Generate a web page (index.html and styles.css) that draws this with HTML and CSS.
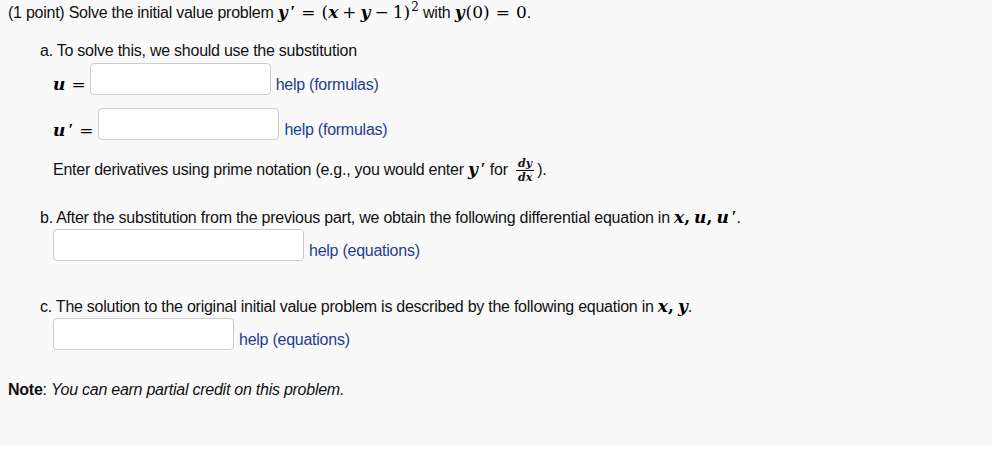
FILE: index.html
```html
<!DOCTYPE html>
<html>
<head>
<meta charset="utf-8">
<link rel="stylesheet" href="styles.css">
</head>
<body>
<div class="problem">
  <p class="line intro">(1 point) Solve the initial value problem <span class="m"><i>y</i><span class="pr">′</span><span class="rel">=</span>(<i>x</i><span class="bin">+</span><i>y</i><span class="bin">−</span>1)<sup>2</sup></span> with <span class="m"><i class="fn">y</i>(0)<span class="rel">=</span>0</span>.</p>

  <div class="part">
    <p class="line">a. To solve this, we should use the substitution</p>
    <div class="row row-u">
      <span class="m lbl"><i>u</i><span class="rel">=</span></span>
      <input class="ans w180" type="text">
      <a class="help">help (formulas)</a>
    </div>
    <div class="row row-up">
      <span class="m lbl"><i>u</i><span class="pr">′</span><span class="rel">=</span></span>
      <input class="ans w180" type="text">
      <a class="help">help (formulas)</a>
    </div>
    <p class="line sub enter">Enter derivatives using prime notation (e.g., you would enter <span class="m"><i>y</i><span class="pr">′</span></span> for <span class="frac"><span class="num">dy</span><span class="den">dx</span></span>).</p>
  </div>

  <div class="part part-b">
    <p class="line">b. After the substitution from the previous part, we obtain the following differential equation in <span class="m"><i>x</i><span class="pun">,</span><i>u</i><span class="pun">,</span><i>u</i><span class="pr">′</span></span>.</p>
    <div class="row sub">
      <input class="ans w250" type="text">
      <a class="help">help (equations)</a>
    </div>
  </div>

  <div class="part part-c">
    <p class="line">c. The solution to the original initial value problem is described by the following equation in <span class="m"><i>x</i><span class="pun">,</span><i>y</i></span>.</p>
    <div class="row sub">
      <input class="ans w180" type="text">
      <a class="help">help (equations)</a>
    </div>
  </div>

  <p class="line note"><b>Note</b>: <em>You can earn partial credit on this problem.</em></p>
</div>
</body>
</html>
```

FILE: styles.css
```css
html, body {
  margin: 0;
  padding: 0;
  background: #ffffff;
}

.problem {
  width: 992px;
  height: 446px;
  box-sizing: border-box;
  background: #f9f9f9;
  padding: 3px 8px 0 8px;
  font-family: "Liberation Sans", Arial, sans-serif;
  font-size: 16px;
  letter-spacing: -0.25px;
  color: #111;
}

.line {
  margin: 0;
  line-height: 20px;
  height: 20px;
  white-space: nowrap;
}

.m {
  font-family: "DejaVu Serif", "Liberation Serif", serif;
  font-size: 17px;
  letter-spacing: 0;
  line-height: 1;
  color: #000;
}

.m i {
  font-weight: bold;
  font-style: italic;
  font-size: 17px;
}

.m i.fn {
  margin-right: 1px;
}

.m .rel {
  display: inline-block;
  margin: 0 6px;
}

.m .bin {
  display: inline-block;
  margin: 0 4px;
}

.m .pun {
  display: inline-block;
  margin-right: 4px;
  font-weight: bold;
}

.m .pr {
  display: inline-block;
  font-family: "Liberation Serif", serif;
  font-weight: bold;
  font-size: 17px;
  margin-left: 3px;
  vertical-align: 1px;
}

.m sup {
  font-size: 12px;
  line-height: 0;
  vertical-align: 7px;
  margin-left: 1px;
}

.part {
  padding-left: 32px;
  margin-top: 18px;
}

.row {
  display: flex;
  align-items: center;
  height: 32px;
  margin-top: 2px;
}

.row-up {
  margin-top: 13px;
}

.sub {
  margin-left: 13px;
}

.row.sub {
  margin-top: 1px;
}

.row .lbl {
  padding-left: 13px;
  padding-top: 11px;
}

.row-u .lbl .rel {
  margin-right: 4px;
}

.row-up .lbl .rel {
  margin-right: 5px;
}

.ans {
  box-sizing: border-box;
  height: 32px;
  border: 1px solid #cccccc;
  border-radius: 4px;
  background: #ffffff;
  margin: 0;
  padding: 4px 6px;
  font-size: 16px;
}

.w180 { width: 181px; }
.w250 { width: 251px; }

.help {
  color: #1c3f8f;
  margin-left: 5px;
  padding-top: 12px;
  line-height: 20px;
  cursor: pointer;
}

.enter {
  margin-top: 18px;
}

.frac {
  display: inline-block;
  vertical-align: middle;
  text-align: center;
  font-family: "DejaVu Serif", "Liberation Serif", serif;
  font-style: italic;
  font-weight: bold;
  font-size: 11px;
  letter-spacing: 0;
  line-height: 11px;
  margin-left: 4px;
  margin-right: 3px;
}

.frac .num,
.frac .den {
  display: block;
  padding: 0 2px;
}

.frac .num {
  border-bottom: 1px solid #000;
  padding-bottom: 1px;
}

.frac .den {
  padding-top: 1px;
}

.part-b {
  margin-top: 30px;
}

.part-c {
  margin-top: 36px;
}

.note {
  margin-top: 30px;
}

.note b {
  font-weight: bold;
}
```
